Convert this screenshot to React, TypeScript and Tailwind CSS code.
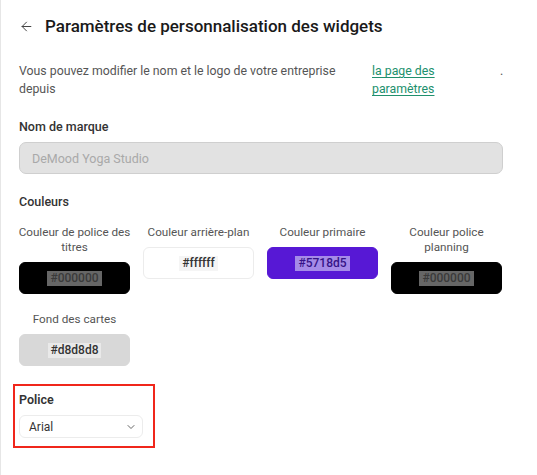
import { ArrowLeft, ChevronDown } from "lucide-react";

const colors = [
  { label: "Couleur de police des titres", value: "#000000", box: "bg-black border-black", chip: "bg-[#666666] text-[#3a3a3a]" },
  { label: "Couleur arrière-plan", value: "#ffffff", box: "bg-white border-[#ececec]", chip: "bg-[#f5f5f5] text-[#333333]" },
  { label: "Couleur primaire", value: "#5718d5", box: "bg-[#5718d5] border-[#5718d5]", chip: "bg-[#a58ae8] text-[#351287]" },
  { label: "Couleur police planning", value: "#000000", box: "bg-black border-black", chip: "bg-[#666666] text-[#3a3a3a]" },
  { label: "Fond des cartes", value: "#d8d8d8", box: "bg-[#d8d8d8] border-[#d8d8d8]", chip: "bg-[#e9e9e9] text-[#333333]" },
];

export default function App() {
  return (
    <div
      className="min-h-[475px] w-[537px] bg-white border-l border-[#e6e6e6] px-[18px] pb-6"
      style={{ fontFamily: "Roboto, 'Noto Sans', sans-serif" }}
    >
      {/* Header */}
      <div className="flex items-center gap-[11px] pt-[8px] h-[45px]">
        <ArrowLeft className="w-[15px] h-[15px] text-[#444]" strokeWidth={1.6} />
        <h1 className="text-[17px] font-medium text-[#1a1a1a]">
          Paramètres de personnalisation des widgets
        </h1>
      </div>

      {/* Description */}
      <div className="grid grid-cols-[353px_128px_1fr] mt-[17px] text-[12.3px] leading-[18px] text-[#555]">
        <span className="pr-[14px]">Vous pouvez modifier le nom et le logo de votre entreprise depuis</span>
        <a href="#" className="text-[#21906d] underline underline-offset-2">
          la page des paramètres
        </a>
        <span>.</span>
      </div>

      {/* Brand name */}
      <div className="mt-[20px]">
        <label className="block text-[12.5px] font-medium text-[#333] leading-[18px]">Nom de marque</label>
        <input
          disabled
          placeholder="DeMood Yoga Studio"
          className="mt-[6px] w-[484px] h-[32px] rounded-[7px] border border-[#cfcfcf] bg-[#e2e2e2] px-[12px] text-[12.5px] placeholder:text-[#a9a9a9]"
        />
      </div>

      {/* Colours */}
      <div className="mt-[19px]">
        <h2 className="text-[12.5px] font-medium text-[#333] leading-[18px]">Couleurs</h2>
        <div className="grid grid-cols-[111px_111px_111px_111px] gap-x-[13px] gap-y-[18px] mt-[14px]">
          {colors.map((c) => (
            <div key={c.label} className="flex flex-col items-stretch">
              <span className="-mx-[4px] text-center text-[11.7px] leading-[15px] text-[#555]">{c.label}</span>
              <div className={`mt-[7px] h-[32px] rounded-[6px] border flex items-center justify-center ${c.box}`}>
                <span className={`px-[3px] text-[12px] leading-[15px] font-medium ${c.chip}`}>{c.value}</span>
              </div>
            </div>
          ))}
        </div>
      </div>

      {/* Font */}
      <div className="mt-[18px] -ml-[6px] w-[142px] border-[2.5px] border-[#f0261b] pl-[4px] pr-[10px] pt-[5px] pb-[8px]">
        <label className="block text-[12.5px] font-semibold text-[#333] leading-[18px]">Police</label>
        <button
          type="button"
          className="mt-[6px] w-full h-[23px] rounded-[6px] border border-[#ececec] flex items-center justify-between pl-[9px] pr-[5px] text-[12px] text-[#333]"
        >
          <span>Arial</span>
          <ChevronDown className="w-[12px] h-[12px] text-[#555]" strokeWidth={1.8} />
        </button>
      </div>
    </div>
  );
}
